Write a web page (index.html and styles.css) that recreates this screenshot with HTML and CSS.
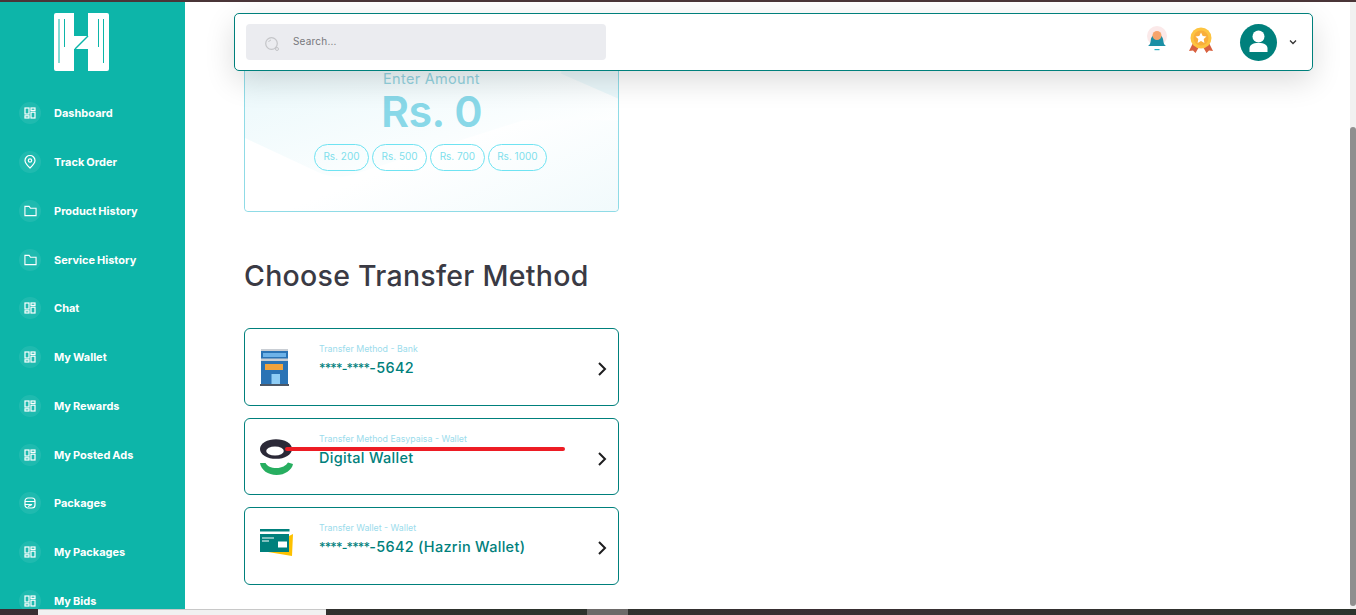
FILE: index.html
```html
<!DOCTYPE html>
<html lang="en">
<head>
<meta charset="utf-8">
<title>Wallet</title>
<link rel="stylesheet" href="styles.css">
</head>
<body>
<svg class="sprite" aria-hidden="true">
  <symbol id="i-grid" viewBox="0 0 12 12"><g fill="none" stroke="currentColor" stroke-width="1.200"><rect x="1" y="1" width="4" height="6"/><rect x="7" y="1" width="4" height="2.400"/><rect x="7" y="5.200" width="4" height="5.800"/><rect x="1" y="8.800" width="4" height="2.200"/></g></symbol>
  <symbol id="i-folder" viewBox="0 0 14 12"><path d="M1 1h4.500l1.500 2h6v8H1z" fill="none" stroke="currentColor" stroke-width="1.200"/></symbol>
  <symbol id="i-pin" viewBox="0 0 12 14"><path d="M6 13C3 10.200 1 8 1 5.500a5 5 0 0 1 10 0C11 8 9 10.200 6 13z" fill="none" stroke="currentColor" stroke-width="1.200"/><circle cx="6" cy="5.500" r="1.700" fill="none" stroke="currentColor" stroke-width="1.200"/></symbol>
  <symbol id="i-pack" viewBox="0 0 12 12"><rect x="1" y="1" width="10" height="10" rx="3" fill="none" stroke="currentColor" stroke-width="1.200"/><path d="M1 4.500h10M1 7.500h7L4 9.500" fill="none" stroke="currentColor" stroke-width="1.100"/></symbol>
  <symbol id="i-chev" viewBox="0 0 10 16"><path d="M2 2l6 6-6 6" fill="none" stroke="#1d1d1f" stroke-width="2"/></symbol>
</svg>
<div class="topstrip"></div>
<div class="app">
  <aside class="sidebar">
    <div class="logo">
      <svg width="55" height="58" viewBox="0 0 55 58">
        <path d="M2 0h18v23h14V0h19a2 2 0 0 1 2 2v54a2 2 0 0 1-2 2H34V36H20v22H2a2 2 0 0 1-2-2V2a2 2 0 0 1 2-2z" fill="#fff"/>
        <path d="M5 6v44M10.500 6v28M44.500 6v28M49.500 6v44" stroke="#0db5a9" stroke-width="1"/>
        <path d="M34 23L21 36" stroke="#0db5a9" stroke-width="1.500"/>
      </svg>
    </div>
    <nav class="nav">
      <a class="nav-item"><span class="nav-ico"><svg width="12" height="12"><use href="#i-grid"/></svg></span>Dashboard</a>
      <a class="nav-item"><span class="nav-ico"><svg width="12" height="14"><use href="#i-pin"/></svg></span>Track Order</a>
      <a class="nav-item"><span class="nav-ico"><svg width="13" height="12"><use href="#i-folder"/></svg></span>Product History</a>
      <a class="nav-item"><span class="nav-ico"><svg width="13" height="12"><use href="#i-folder"/></svg></span>Service History</a>
      <a class="nav-item"><span class="nav-ico"><svg width="12" height="12"><use href="#i-grid"/></svg></span>Chat</a>
      <a class="nav-item"><span class="nav-ico"><svg width="12" height="12"><use href="#i-grid"/></svg></span>My Wallet</a>
      <a class="nav-item"><span class="nav-ico"><svg width="12" height="12"><use href="#i-grid"/></svg></span>My Rewards</a>
      <a class="nav-item"><span class="nav-ico"><svg width="12" height="12"><use href="#i-grid"/></svg></span>My Posted Ads</a>
      <a class="nav-item"><span class="nav-ico"><svg width="12" height="12"><use href="#i-pack"/></svg></span>Packages</a>
      <a class="nav-item"><span class="nav-ico"><svg width="12" height="12"><use href="#i-grid"/></svg></span>My Packages</a>
      <a class="nav-item"><span class="nav-ico"><svg width="12" height="12"><use href="#i-grid"/></svg></span>My Bids</a>
    </nav>
  </aside>

  <main class="main">
    <header class="topbar">
      <div class="search">
        <svg width="16" height="16" viewBox="0 0 16 16"><circle cx="7.500" cy="7.500" r="5.800" fill="none" stroke="#c4c5c8" stroke-width="1.200"/><path d="M4.500 6a3.500 3.500 0 0 1 2.500-2" fill="none" stroke="#c4c5c8"/><circle cx="13" cy="13" r="1.500" fill="none" stroke="#c4c5c8"/></svg>
        <span class="search-text">Search...</span>
      </div>
      <div class="top-actions">
        <svg class="bell" width="24" height="26" viewBox="0 0 24 26">
          <circle cx="12" cy="10" r="10" fill="#fbe9e9"/>
          <path d="M3 20c2-1 2.500-3 2.800-6C6.200 10.500 8.500 8.500 12 8.500s5.800 2 6.200 5.500c.3 3 .8 5 2.800 6z" fill="#1a8fa5"/>
          <circle cx="12" cy="9.500" r="4.500" fill="#f6a46c"/>
          <rect x="9.500" y="23" width="5" height="1.200" fill="#2ab0c4"/>
        </svg>
        <svg class="medal" width="28" height="28" viewBox="0 0 28 28">
          <path d="M6 17L2 25l4-.5 2.500 2.500L12 21zM22 17l4 8-4-.5-2.500 2.500L16 21z" fill="#d8603f"/>
          <circle cx="14" cy="12" r="10.500" fill="#fdc440"/>
          <circle cx="14" cy="12" r="7.500" fill="#f9ae3a"/>
          <path d="M14 6.500l1.700 3.500 3.800.5-2.800 2.600.7 3.800-3.400-1.900-3.400 1.900.7-3.800-2.800-2.600 3.800-.5z" fill="#fff"/>
        </svg>
        <span class="avatar">
          <svg width="37" height="37" viewBox="0 0 37 37"><circle cx="18.500" cy="12.500" r="6" fill="#fff"/><path d="M9.500 28v-3.500c0-3.500 3-5.500 9-5.500s9 2 9 5.500V28z" fill="#fff"/></svg>
        </span>
        <svg width="8" height="6" viewBox="0 0 8 6"><path d="M1 1.500l3 3 3-3" fill="none" stroke="#333" stroke-width="1.300"/></svg>
      </div>
    </header>

    <section class="amount">
      <svg class="amount-bg" viewBox="0 0 375 152" preserveAspectRatio="none" aria-hidden="true">
        <defs>
          <linearGradient id="g1" x1="0" y1="0" x2="1" y2="1"><stop offset="0" stop-color="#e9f8fb"/><stop offset=".8" stop-color="#fff"/></linearGradient>
          <linearGradient id="g2" x1="0" y1="0" x2="1" y2="1"><stop offset=".55" stop-color="#fff"/><stop offset="1" stop-color="#f1fafc"/></linearGradient>
        </defs>
        <rect width="375" height="152" fill="url(#g2)" rx="4"/>
        <path d="M0 78L72 112c12 6 26 7 40 2L280 60l95 0V0H0z" fill="url(#g1)"/>
        <path d="M318 13L375 38V0H318z" fill="#eaf8fb"/>
      </svg>
      <div class="amount-body">
        <div class="amount-label">Enter Amount</div>
        <div class="amount-value">Rs. 0</div>
        <div class="chips">
          <span class="chip">Rs. 200</span>
          <span class="chip">Rs. 500</span>
          <span class="chip">Rs. 700</span>
          <span class="chip">Rs. 1000</span>
        </div>
      </div>
    </section>

    <h1 class="title">Choose Transfer Method</h1>

    <div class="methods">
      <a class="method">
        <svg class="method-ico ico-bank" width="34" height="38" viewBox="0 0 34 38">
          <rect x="1" y="2" width="27" height="33" fill="#2a73b5"/>
          <rect x="1" y="0" width="27" height="2" fill="#c9ced4"/>
          <rect x="1" y="9.500" width="27" height="2.500" fill="#c9ced4"/>
          <rect x="3" y="4" width="23" height="4" fill="#6db2e8"/>
          <rect x="5" y="15" width="18" height="6" fill="#f2a33c"/>
          <rect x="11.500" y="25" width="8.500" height="10" fill="#8fcdf5"/>
          <rect x="0" y="35" width="29" height="2" fill="#4d5866"/>
        </svg>
        <span class="method-text"><span class="method-label">Transfer Method - Bank</span><span class="method-value"><span class="mask">****-****</span>-5642</span></span>
        <svg class="method-chev" width="10" height="16"><use href="#i-chev"/></svg>
      </a>
      <a class="method">
        <svg class="method-ico ico-ep" width="34" height="38" viewBox="0 0 34 38">
          <ellipse cx="16" cy="10" rx="16" ry="9.800" fill="#2b2937"/>
          <ellipse cx="15" cy="12" rx="8.800" ry="4.500" fill="#fff"/>
          <path d="M0 24c1 7 8 12 16.500 12S32 31 33 25l-5-1.500c-2 3-6 5.500-11.500 5.500S7 27 5.500 24z" fill="#27ae60"/>
        </svg>
        <span class="method-text"><span class="method-label">Transfer Method Easypaisa - Wallet</span><span class="method-value">Digital Wallet</span></span>
        <svg class="method-chev" width="10" height="16"><use href="#i-chev"/></svg>
        <span class="strike"></span>
      </a>
      <a class="method">
        <svg class="method-ico ico-wallet" width="34" height="38" viewBox="0 0 34 38">
          <path d="M2 22l30 5 1-22-4 2v15z" fill="#fdc100"/>
          <rect x="0" y="0" width="29.500" height="2.500" fill="#00807c"/>
          <rect x="0" y="5" width="29" height="18" fill="#00807c"/>
          <rect x="18" y="12.500" width="9" height="6" fill="#fff"/>
          <path d="M2 9h12M2 12h7" stroke="#fff" stroke-width="1.200"/>
        </svg>
        <span class="method-text"><span class="method-label">Transfer Wallet - Wallet</span><span class="method-value"><span class="mask">****-****</span>-5642 (Hazrin Wallet)</span></span>
        <svg class="method-chev" width="10" height="16"><use href="#i-chev"/></svg>
      </a>
    </div>
  </main>

  <div class="scrollbar"><span class="scrollbar-thumb"></span></div>
</div>
<footer class="bottomstrip">
  <span class="strip-gap-a"></span>
  <span class="strip-tab"></span>
  <span class="strip-gap-b"></span>
  <span class="strip-grey"></span>
</footer>
</body>
</html>
```
FILE: styles.css
```css
* { box-sizing: border-box; }
html, body { margin: 0; height: 615px; overflow: hidden; }
body {
  display: flex;
  flex-direction: column;
  background: #fff;
  font-family: "Inter", "Liberation Sans", sans-serif;
}
.sprite { display: none; }
.topstrip { height: 2px; background: #4a3538; flex: none; }
.app { flex: 1; display: flex; min-height: 0; }

.sidebar {
  width: 185px;
  flex: none;
  background: #0db5a9;
  color: #fff;
  overflow: hidden;
  padding-top: 11px;
}
.logo { padding-left: 54px; height: 58px; }
.logo svg { display: block; }
.nav { display: flex; flex-direction: column; margin-top: 18px; }
.nav-item {
  height: 48.750px;
  flex: none;
  display: flex;
  align-items: center;
  gap: 13px;
  padding-left: 19px;
  font-size: 11px;
  font-weight: 700;
  word-spacing: -.6px;
  white-space: nowrap;
}
.nav-ico {
  width: 22px;
  height: 22px;
  border-radius: 50%;
  background: rgba(255,255,255,.08);
  display: flex;
  align-items: center;
  justify-content: center;
  flex: none;
}
.nav-ico svg { display: block; }

.main { flex: 1; min-width: 0; position: relative; padding: 58px 0 0 59px; overflow: hidden; }

.topbar {
  position: absolute;
  z-index: 2;
  top: 11px;
  left: 49px;
  right: 37px;
  height: 58px;
  background: #fff;
  border: 1px solid #00807c;
  border-radius: 5px;
  box-shadow: 0 10px 30px rgba(0,0,0,.14);
  display: flex;
  align-items: center;
  padding: 0 15px 0 11px;
}
.search {
  width: 360px;
  height: 36px;
  background: #ebecf0;
  border-radius: 4px;
  display: flex;
  align-items: center;
  padding-left: 18px;
  gap: 13px;
}
.search svg { margin-top: 3px; }
.search-text { font-size: 10px; color: #77787c; letter-spacing: .2px; margin-top: -2px; }
.top-actions { margin-left: auto; display: flex; align-items: center; }
.bell { margin-top: -6px; margin-left: -1px; }
.medal { margin-left: 18px; margin-top: -4px; }
.avatar {
  width: 37px;
  height: 37px;
  border-radius: 50%;
  background: #00807c;
  margin: 1px 12px 0 25px;
}
.avatar svg { display: block; }

.amount {
  position: relative;
  width: 375px;
  height: 152px;
  border: 1px solid #8fdbe6;
  border-radius: 4px;
  overflow: hidden;
}
.amount-bg { position: absolute; inset: 0; width: 100%; height: 100%; }
.amount-body {
  position: relative;
  padding-top: 9px;
  display: flex;
  flex-direction: column;
  align-items: center;
}
.amount-label { font-size: 14.500px; line-height: 18px; color: #94d3e0; letter-spacing: .3px; }
.amount-value { font-size: 43px; line-height: 48px; font-weight: 600; color: #89d8e8; margin-top: -1px; letter-spacing: -.5px; }
.chips { display: flex; gap: 3px; margin-top: 9px; margin-left: -2px; }
.chip {
  height: 27px;
  border: 1px solid #6fe3f2;
  border-radius: 14px;
  padding: 0 8.500px 3px;
  display: flex;
  align-items: center;
  font-size: 10px;
  color: #7fdfec;
  white-space: nowrap;
}

.title { margin: 46px 0 0; font-size: 28.500px; line-height: 36px; font-weight: 500; color: #3a3a44; letter-spacing: .27px; }

.methods { margin-top: 34px; width: 375px; display: flex; flex-direction: column; gap: 12px; }
.method {
  position: relative;
  height: 77.500px;
  border: 1px solid #00807c;
  border-radius: 6px;
  display: flex;
  align-items: flex-start;
  padding-left: 15px;
  padding-right: 11px;
}
.method-ico { flex: none; }
.ico-bank { margin-top: 20px; }
.ico-ep { margin-top: 20px; }
.ico-wallet { margin-top: 21px; }
.method-text { display: flex; flex-direction: column; margin-left: 25px; padding-top: 14px; flex: 1; }
.method-label { font-size: 8.800px; line-height: 12px; color: #9cdcec; }
.method-value { font-size: 14.500px; line-height: 20px; font-weight: 500; color: #00807c; margin-top: 3px; letter-spacing: .3px; }
.mask { font-size: 12.500px; letter-spacing: -.85px; }
.method-chev { flex: none; margin-top: 32px; }
.strike {
  position: absolute;
  left: 40px;
  top: 28px;
  width: 280px;
  height: 4px;
  border-radius: 2px;
  background: #ed1c24;
}

.scrollbar { width: 6px; flex: none; background: #f1f1f1; padding-top: 125px; padding-bottom: 3px; display: flex; }
.scrollbar-thumb { flex: 1; background: #8f8f8f; border-radius: 3px; }

.bottomstrip {
  height: 6px;
  flex: none;
  display: flex;
  background: linear-gradient(90deg, #3a2e33 0%, #2c332c 40%, #3a2e33 60%, #2c332c 100%);
}
.strip-gap-a { width: 38px; }
.strip-tab { width: 288px; background: #f1f1f1; border-top: 1px solid #c8c8c8; }
.strip-gap-b { width: 261px; }
.strip-grey { width: 41px; background: #6d6a69; }
```
